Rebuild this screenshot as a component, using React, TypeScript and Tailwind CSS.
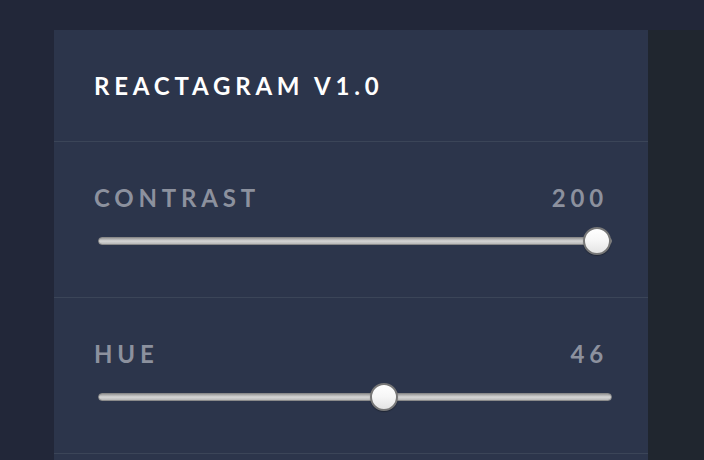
import React from "react";

const controls = [
  { id: "contrast", label: "CONTRAST", value: 200, pos: 597 - 98 },
  { id: "hue", label: "HUE", value: 46, pos: 384 - 98 },
];

const Slider = ({ pos }: { pos: number }) => {
  return (
    <div className="relative h-[30px] ml-[4px] -mr-[4px] flex items-center">
      <div className="w-full h-[8px] rounded-full bg-gradient-to-b from-[#9a9a9a] via-[#d6d6d6] to-[#b8b8b8] border border-[#8a8a8a]" />
      <div
        className="absolute top-[1px] w-[28px] h-[28px] -ml-[14px] rounded-full border-2 border-[#777777] bg-gradient-to-b from-[#ffffff] via-[#f6f6f6] to-[#e4e4e4] shadow-[0_1px_1px_rgba(0,0,0,0.3)]"
        style={{ left: pos }}
      />
    </div>
  );
};

export default function App() {
  return (
    <div className="w-[704px] h-[460px] overflow-hidden bg-[#222739] font-['Lato',sans-serif]">
      <div className="flex pt-[30px] h-full">
        <div className="w-[54px] shrink-0" />
        <div className="w-[594px] shrink-0 bg-[#2c354b]">
          <div className="h-[111px] px-10 flex items-center">
            <h1 className="text-[24px] font-bold text-white tracking-[0.2em] leading-none">
              REACTAGRAM V1.0
            </h1>
          </div>
          {controls.map((c) => (
            <div key={c.id} className="h-[156px] border-t border-[#3b4558] px-10 pt-[43px]">
              <div className="h-[26px] flex items-center justify-between text-[24px] font-bold text-[#8c919e] tracking-[0.2em] leading-none">
                <span>{c.label}</span>
                <span>{c.value}</span>
              </div>
              <div className="mt-[15px]">
                <Slider pos={c.pos} />
              </div>
            </div>
          ))}
          <div className="border-t border-[#3b4558]" />
        </div>
        <div className="flex-1 bg-[#20262f]" />
      </div>
    </div>
  );
}
